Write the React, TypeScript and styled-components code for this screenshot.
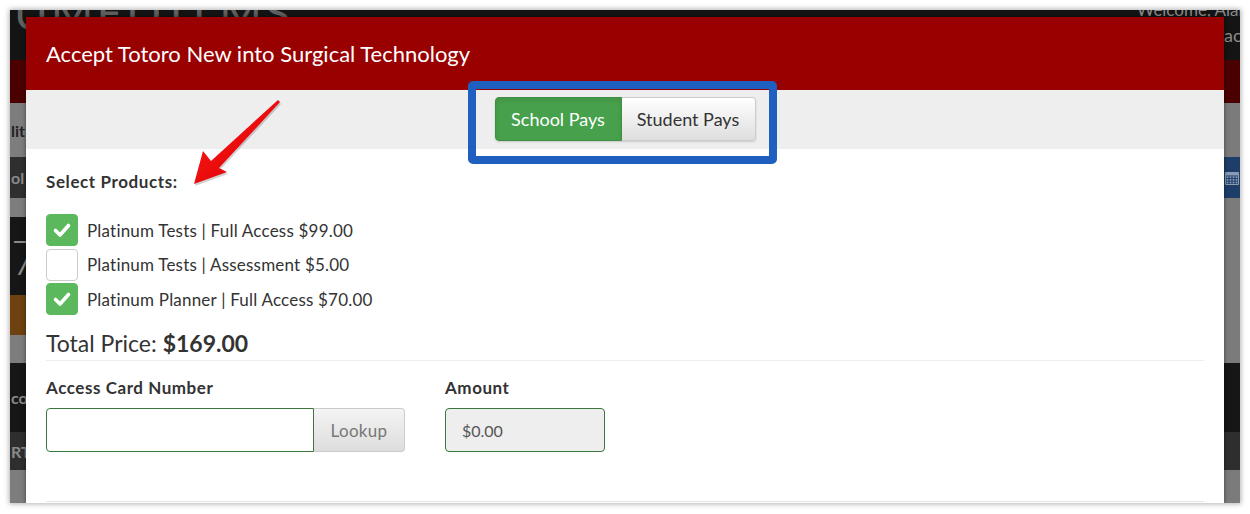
import styled, { createGlobalStyle } from 'styled-components';

const GlobalStyle = createGlobalStyle`
	body {
		margin: 0;
		background: #ffffff;
		font-family: Lato, 'Liberation Sans', sans-serif;
	}
	* {
		box-sizing: border-box;
	}
`;

interface BackRow {
	height: number;
	left: string;
	right: string;
	leftText?: string;
	leftSize?: number;
	rightIcon?: boolean;
}

// underlying page, only the strips at the sides show past the modal
const backRows: BackRow[] = [
	{ height: 43, left: '#4a0000', right: '#4a0000' },
	{ height: 54, left: '#7d7d7d', right: '#7b7b7b', leftText: 'lit' },
	{ height: 41, left: '#2f2f2f', right: '#1d3e68', leftText: 'ol', rightIcon: true },
	{ height: 19, left: '#7d7d7d', right: '#7b7b7b' },
	{ height: 78, left: '#161616', right: '#7b7b7b', leftText: '7', leftSize: 48 },
	{ height: 40, left: '#6e4210', right: '#7b7b7b' },
	{ height: 28, left: '#7d7d7d', right: '#7b7b7b' },
	{ height: 69, left: '#161616', right: '#161616', leftText: 'co' },
	{ height: 38, left: '#2e2e2e', right: '#2e2e2e', leftText: 'RTS' },
	{ height: 40, left: '#7d7d7d', right: '#7b7b7b' },
];

const products = [
	{ name: 'Platinum Tests | Full Access $99.00', checked: true },
	{ name: 'Platinum Tests | Assessment $5.00', checked: false },
	{ name: 'Platinum Planner | Full Access $70.00', checked: true },
];

const CheckMark = () => (
	<svg
		width='20'
		height='20'
		viewBox='0 0 20 20'>
		<path
			d='M3.5 10.5 L8 15 L16.5 5.5'
			fill='none'
			stroke='#ffffff'
			strokeWidth='3.6'
			strokeLinecap='round'
			strokeLinejoin='round'
		/>
	</svg>
);

const CalendarIcon = () => (
	<svg
		width='14'
		height='15'
		viewBox='0 0 14 15'>
		<rect x='0' y='2' width='14' height='13' rx='1' fill='#8a9bb3' />
		<rect x='1' y='5.5' width='12' height='8.5' fill='#1d3e68' />
		{[0, 1, 2, 3].map((c) =>
			[0, 1, 2].map((r) => (
				<rect
					key={`${c}-${r}`}
					x={1.6 + c * 3}
					y={6.2 + r * 2.7}
					width='1.8'
					height='1.8'
					fill='#8a9bb3'
				/>
			))
		)}
	</svg>
);

const App = () => {
	return (
		<>
			<GlobalStyle />
			<Frame>
				<Window>
					<PageHeader>
						<Logo>UMEDTLMS</Logo>
						<HeaderRight>
							<Welcome>Welcome, Alan</Welcome>
							<HeaderLink>Contact</HeaderLink>
						</HeaderRight>
					</PageHeader>
					{backRows.map((row, i) => (
						<PageRow
							key={i}
							$height={row.height}
							$left={row.left}>
							<SideCell
								$bg={row.left}
								$size={row.leftSize}>
								{row.leftText}
							</SideCell>
							<SideCell
								$bg={row.right}
								$alignRight>
								{row.rightIcon && <CalendarIcon />}
							</SideCell>
						</PageRow>
					))}

					<Modal>
						<ModalHeader>
							<Title>Accept Totoro New into Surgical Technology</Title>
						</ModalHeader>
						<PayBar>
							<Toggle>
								<ToggleButton $active>School Pays</ToggleButton>
								<ToggleButton>Student Pays</ToggleButton>
							</Toggle>
						</PayBar>
						<ModalBody>
							<SectionLabel>Select Products:</SectionLabel>
							<ProductList>
								{products.map((p) => (
									<ProductRow key={p.name}>
										<CheckBox $checked={p.checked}>{p.checked && <CheckMark />}</CheckBox>
										<ProductName>{p.name}</ProductName>
									</ProductRow>
								))}
							</ProductList>
							<Total>
								Total Price: <strong>$169.00</strong>
							</Total>
							<Divider />
							<FieldRow>
								<Field>
									<FieldLabel>Access Card Number</FieldLabel>
									<InputGroup>
										<CardInput type='text' />
										<LookupButton>Lookup</LookupButton>
									</InputGroup>
								</Field>
								<Field>
									<FieldLabel>Amount</FieldLabel>
									<AmountBox>$0.00</AmountBox>
								</Field>
							</FieldRow>
							<BottomDivider />
						</ModalBody>
					</Modal>

					<Highlight />
					<Arrow
						width='1230'
						height='493'
						viewBox='0 0 1230 493'>
						<defs>
							<linearGradient
								id='arrowFill'
								x1='0'
								y1='0'
								x2='1'
								y2='1'>
								<stop offset='0' stopColor='#ff1a1a' />
								<stop offset='1' stopColor='#d80000' />
							</linearGradient>
						</defs>
						<polygon
							points='184,174 193,141 201,151 268,90 270,92 209,158 217,162'
							fill='rgba(0,0,0,0.18)'
							transform='translate(1 2)'
						/>
						<polygon
							points='184,174 193,141 201,151 268,90 270,92 209,158 217,162'
							fill='url(#arrowFill)'
						/>
					</Arrow>
				</Window>
			</Frame>
		</>
	);
};

export default App;

const Frame = styled.div`
	padding: 10px;
	width: 1250px;
	height: 514px;
`;

const Window = styled.div`
	position: relative;
	width: 1230px;
	height: 493px;
	overflow: hidden;
	background: #141414;
	box-shadow: 0 0 5px 1px rgba(0, 0, 0, 0.3);
`;

const PageHeader = styled.div`
	height: 50px;
	display: flex;
	justify-content: space-between;
	background: #141414;
	overflow: hidden;
`;

const Logo = styled.div`
	margin: -20px 0 0 4px;
	font-family: Lato, sans-serif;
	font-weight: 400;
	font-size: 46px;
	line-height: 46px;
	letter-spacing: 3px;
	color: #606060;
	white-space: nowrap;
`;

const HeaderRight = styled.div`
	display: flex;
	flex-direction: column;
	align-items: flex-end;
`;

const Welcome = styled.div`
	margin-top: -8px;
	margin-right: -8px;
	font-size: 17px;
	line-height: 16px;
	color: #8a8a8a;
	white-space: nowrap;
`;

const HeaderLink = styled.div`
	margin-top: 7px;
	margin-right: -8px;
	font-size: 18px;
	line-height: 20px;
	color: #8a8a8a;
	white-space: nowrap;
`;

const PageRow = styled.div<{ $height: number; $left: string }>`
	height: ${(p) => p.$height}px;
	display: flex;
	justify-content: space-between;
	background: ${(p) => p.$left};
`;

const SideCell = styled.div<{ $bg: string; $size?: number; $alignRight?: boolean }>`
	width: 16px;
	height: 100%;
	display: flex;
	align-items: center;
	justify-content: ${(p) => (p.$alignRight ? 'flex-end' : 'flex-start')};
	padding: 0 1px;
	overflow: hidden;
	background: ${(p) => p.$bg};
	font-size: ${(p) => p.$size ?? 16}px;
	font-weight: ${(p) => (p.$size ? 300 : 700)};
	color: ${(p) => (p.$bg === '#7d7d7d' ? '#222' : '#8a8a8a')};
	white-space: nowrap;
`;

const Modal = styled.div`
	position: absolute;
	top: 7px;
	left: 16px;
	width: 1198px;
	bottom: 0;
	background: #ffffff;
	box-shadow: 0 0 4px rgba(0, 0, 0, 0.5);
	color: #333333;
`;

const ModalHeader = styled.div`
	height: 73px;
	display: flex;
	align-items: center;
	padding: 0 20px;
	background: #990000;
`;

const Title = styled.h4`
	margin: 0;
	font-size: 22px;
	font-weight: 400;
	color: #ffffff;
`;

const PayBar = styled.div`
	height: 59px;
	display: flex;
	justify-content: center;
	align-items: center;
	padding-bottom: 1px;
	background: #eeeeee;
`;

const Toggle = styled.div`
	display: flex;
	height: 44px;
	border-radius: 4px;
	box-shadow: 0 1px 2px rgba(0, 0, 0, 0.15);
`;

const ToggleButton = styled.button<{ $active?: boolean }>`
	height: 44px;
	padding: 0;
	font-family: Lato, sans-serif;
	font-size: 18px;
	border: 1px solid ${(p) => (p.$active ? '#3f8f42' : '#cccccc')};
	color: ${(p) => (p.$active ? '#ffffff' : '#333333')};
	background: ${(p) =>
		p.$active ? '#47a04b' : 'linear-gradient(to bottom, #ffffff 0%, #dedede 100%)'};
	box-shadow: ${(p) => (p.$active ? 'inset 0 3px 5px rgba(0, 0, 0, 0.08)' : 'none')};

	&:first-child {
		border-radius: 4px 0 0 4px;
		width: 127px;
	}
	&:last-child {
		border-left: 0;
		border-radius: 0 4px 4px 0;
		width: 134px;
	}
`;

const ModalBody = styled.div`
	padding: 22px 20px 0;
`;

const SectionLabel = styled.div`
	font-size: 17px;
	line-height: 22px;
	font-weight: 700;
	letter-spacing: 0.6px;
`;

const ProductList = styled.div`
	display: flex;
	flex-direction: column;
	gap: 2.5px;
	margin-top: 21px;
`;

const ProductRow = styled.label`
	display: flex;
	align-items: center;
	gap: 9px;
`;

const CheckBox = styled.span<{ $checked: boolean }>`
	width: 32px;
	height: 32px;
	display: flex;
	align-items: center;
	justify-content: center;
	border-radius: 4px;
	border: 1px solid ${(p) => (p.$checked ? '#5cb85c' : '#cccccc')};
	background: ${(p) => (p.$checked ? '#5cb85c' : '#ffffff')};
`;

const ProductName = styled.span`
	font-size: 17px;
	letter-spacing: 0.2px;
`;

const Total = styled.div`
	margin-top: 13px;
	font-size: 23px;
	line-height: 30px;

	& strong {
		font-weight: 700;
	}
`;

const Divider = styled.hr`
	margin: 2px 0 0;
	border: 0;
	border-top: 1px solid #eeeeee;
`;

const FieldRow = styled.div`
	display: grid;
	grid-template-columns: 399px 160px;
	margin-top: 16px;
`;

const Field = styled.div`
	display: flex;
	flex-direction: column;
	gap: 9px;
`;

const FieldLabel = styled.div`
	font-size: 17px;
	line-height: 22px;
	font-weight: 700;
	letter-spacing: 0.55px;
`;

const InputGroup = styled.div`
	display: flex;
	height: 44px;
`;

const CardInput = styled.input`
	width: 268px;
	height: 44px;
	border: 1px solid #3c763d;
	border-radius: 4px 0 0 4px;
	outline: none;
`;

const LookupButton = styled.button`
	width: 91px;
	height: 44px;
	font-family: Lato, sans-serif;
	font-size: 17px;
	letter-spacing: 0.3px;
	color: #777777;
	border: 1px solid #cccccc;
	border-left: 0;
	border-radius: 0 4px 4px 0;
	background: linear-gradient(to bottom, #f4f4f4 0%, #dddddd 100%);
`;

const AmountBox = styled.div`
	height: 44px;
	display: flex;
	align-items: center;
	padding-left: 16px;
	font-size: 16px;
	color: #555555;
	border: 1px solid #3c763d;
	border-radius: 4px;
	background: #eeeeee;
`;

const BottomDivider = styled.hr`
	margin: 49px 0 0;
	border: 0;
	border-top: 1px solid #e5e5e5;
`;

const Highlight = styled.div`
	position: absolute;
	left: 458px;
	top: 71px;
	width: 309px;
	height: 83px;
	border: 8px solid #1f5fbf;
	border-radius: 5px;
	pointer-events: none;
`;

const Arrow = styled.svg`
	position: absolute;
	left: 0;
	top: 0;
	pointer-events: none;
`;
